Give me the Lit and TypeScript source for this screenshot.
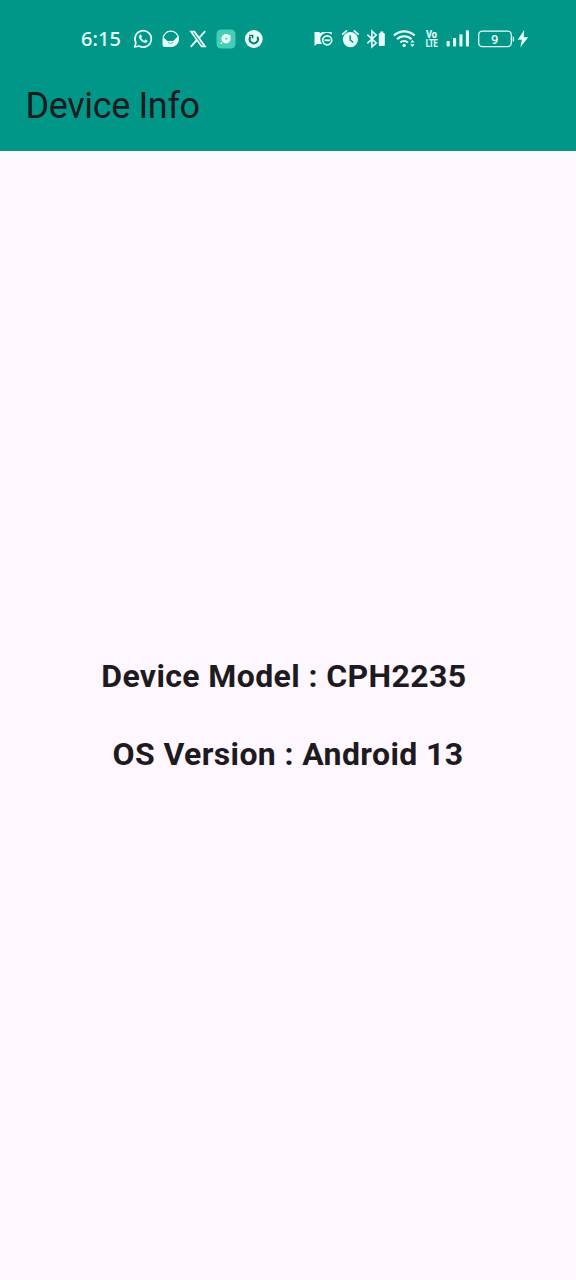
import { LitElement, html, css, svg } from "lit";
import { customElement, property } from "lit/decorators.js";

@customElement("status-bar")
class StatusBar extends LitElement {
  static styles = css`
    :host {
      display: flex;
      justify-content: space-between;
      height: 24px;
      padding: 0 47px 0 81px;
      color: #e6fffb;
    }
    .left, .right { display: flex; align-items: center; }
    .time {
      width: 51.5px;
      font: 500 20px/22px "Noto Sans", sans-serif;
      letter-spacing: 0.1px;
    }
    .apps { display: flex; gap: 7.75px; }
    svg { display: block; flex: none; overflow: visible; }
    text { font-family: Roboto, sans-serif; font-weight: 700; fill: currentColor; }
    .level { font-weight: 500; }
    .volte { font-size: 10px; stroke: currentColor; stroke-width: 0.15px; }
  `;

  render() {
    return html`
      <div class="left">
        <span class="time">6:15</span>
        <div class="apps">
          <svg width="20" height="20" viewBox="0 0 20 20">
            <path d="M1.700 18l1.200-4.200A8.200 8.200 0 1 1 6 17z" fill="none" stroke="currentColor" stroke-width="1.700" stroke-linejoin="round"/>
            <path d="M7.200 5.600c.5-.3.9-.1 1.100.4l.6 1.500c.1.4-.5 1-.7 1.300.7 1.400 1.700 2.300 3.100 2.900.5-.5.9-1.200 1.300-1.100l1.700.9c.5.4.1 1.500-.5 2-2.300 1.400-7.700-2.300-7.800-5.800 0-.8.5-1.700 1.200-2.100z" fill="currentColor"/>
          </svg>
          <svg width="20" height="20" viewBox="-.6 0 20 20">
            <path d="M2.500 12V9.800a7.700 7.700 0 1 1 15.400 0 7.700 7.700 0 0 1-7.700 7.700H4.400a1.900 1.900 0 0 1-1.900-1.900z" fill="none" stroke="currentColor" stroke-width="1.200"/>
            <path d="M2.500 8.500c1.500.2 2.800 2.800 4.700 3.600 1.300.5 2.300-.5 3.300-.2 1 .2 1.700.2 2.500-.5 1.600-1.400 2.800-3.200 4.800-4 1.200 5.200-2.300 10.100-7.600 10.100H4.400a1.900 1.900 0 0 1-1.900-1.900z" fill="currentColor"/>
            <path d="M7.500 13.400l2.700 1.100 2.900-1.400" fill="none" stroke="#3fae9f" stroke-width=".8"/>
          </svg>
          <svg width="20" height="20" viewBox="-.5 0 20 20" fill="none" stroke="currentColor">
            <path d="M2.600 2.700h3.300l10.500 14.700h-3.300z" stroke-width="1.800"/>
            <path d="M16.700 2.200l-6.300 6.900M8.400 11L2.200 17.800" stroke-width="1.900"/>
          </svg>
          <svg width="20" height="20" viewBox="0 0 20 20">
            <rect x=".5" y=".5" width="19" height="19" rx="4.500" fill="#46cdb6"/>
            <circle cx="10" cy="9.800" r="4.700" fill="currentColor"/>
            <path d="M12.700 6.300l2-.3-.4 2.200z" fill="currentColor"/>
            <circle cx="5.400" cy="14.200" r=".9" fill="currentColor"/>
            <circle cx="10.300" cy="9.700" r="1.100" fill="#46cdb6"/>
          </svg>
          <svg width="20" height="20" viewBox="0 0 20 20">
            <circle cx="9.800" cy="10" r="8.900" fill="currentColor"/>
            <path d="M6.400 7.900a4.100 4.100 0 1 0 6.800 0" fill="none" stroke="#087c70" stroke-width="2"/>
            <path d="M5.200 6.500h3.400v2.800" fill="none" stroke="#087c70" stroke-width="1.500"/>
          </svg>
        </div>
      </div>
      <div class="right">
        <svg width="216" height="24" viewBox="313 27 216 24">
          <path d="M314.500 32h4.500l1.500 1.300 1.500-1.300h9.700v2.700a6.600 6.600 0 0 0-9.500 9.300h-5.200l-2.500 2z" fill="currentColor"/>
          <circle cx="327.200" cy="40.300" r="4.500" fill="none" stroke="currentColor" stroke-width="1.700"/>
          <path d="M324.600 40.300h5.200" stroke="currentColor" stroke-width="1.800"/>

          <circle cx="350.400" cy="39.600" r="7.600" fill="currentColor"/>
          <path d="M342.700 34.200l3.700-3.300M354.400 30.900l3.700 3.300" stroke="currentColor" stroke-width="1.800" stroke-linecap="round"/>
          <path d="M350.200 35.300v4.500l3 2.700" fill="none" stroke="#009688" stroke-width="1.500"/>

          <path d="M367.400 34.700l8.800 8.300-4.300 3.900v-15.800l4.300 3.900-8.800 8.300" fill="none" stroke="currentColor" stroke-width="1.600"/>
          <path d="M380.300 31.500h3v1.600h.5q1 0 1 1v10.800q0 1-1 1h-4q-1 0-1-1v-10.800q0-1 1-1h.5z" fill="currentColor"/>

          <g fill="none" stroke="currentColor" stroke-width="2.100">
            <path d="M393.900 35.600a14.800 14.800 0 0 1 20.700 0"/>
            <path d="M397 39.300a10.300 10.300 0 0 1 14.500 0"/>
            <path d="M400.300 42.500a5.800 5.800 0 0 1 7.600 0"/>
          </g>
          <circle cx="404.200" cy="45.400" r="1.700" fill="currentColor"/>
          <path d="M410.200 42.600l2.200-2.700 2.200 2.700zM410.200 44.300l2.200 2.700 2.200-2.700z" fill="currentColor"/>

          <text class="volte" x="426" y="37.700" textLength="11" lengthAdjust="spacingAndGlyphs">Vo</text>
          <text class="volte" x="425.700" y="46.500" textLength="12" lengthAdjust="spacingAndGlyphs">LTE</text>

          ${[[446.600, 41], [453, 38], [459.400, 34.200], [465.900, 30.300]].map(
            ([x, y]) => svg`<rect x=${x} y=${y} width="3.100" height=${46.500 - y} rx=".7" fill="currentColor"/>`
          )}

          <rect x="478.700" y="31.200" width="32.600" height="15.400" rx="3.600" fill="none" stroke="currentColor" stroke-width="1.300"/>
          <path d="M512.700 36.400q1.400 0 1.400 1.400v2.500q0 1.400-1.400 1.400z" fill="currentColor"/>
          <text class="level" x="494.600" y="43.500" font-size="13" text-anchor="middle">9</text>
          <path d="M524.200 30l-6.500 9.800h4.200l-1.700 7.700 8-10.300h-4.400z" fill="currentColor"/>
        </svg>
      </div>
    `;
  }
}

@customElement("app-bar")
class AppBar extends LitElement {
  @property() heading = "";
  static styles = css`
    :host { display: block; padding: 34px 26px 24px 25.500px; }
    h1 { margin: 0; font: 400 36px/42px Roboto, sans-serif; letter-spacing: -0.370px; color: #1d1b20; }
  `;
  render() {
    return html`<h1>${this.heading}</h1>`;
  }
}

@customElement("app-root")
class AppRoot extends LitElement {
  static styles = css`
    :host {
      display: flex;
      flex-direction: column;
      height: 1280px;
      background: #fef7ff;
      font-family: Roboto, sans-serif;
      color: #1d1b20;
    }
    header { box-sizing: border-box; height: 151px; padding-top: 27px; background: #009688; }
    main {
      flex: 1;
      display: flex;
      flex-direction: column;
      justify-content: center;
      align-items: center;
      padding-bottom: 2px;
    }
    p { margin: 0; font-size: 32px; line-height: 38px; font-weight: 700; letter-spacing: 0.380px; white-space: pre; }
    p + p { margin-top: 40px; }
  `;
  render() {
    return html`
      <header>
        <status-bar></status-bar>
        <app-bar heading="Device Info"></app-bar>
      </header>
      <main>
        <p>${"Device Model : CPH2235 "}</p>
        <p>OS Version : Android 13</p>
      </main>
    `;
  }
}
